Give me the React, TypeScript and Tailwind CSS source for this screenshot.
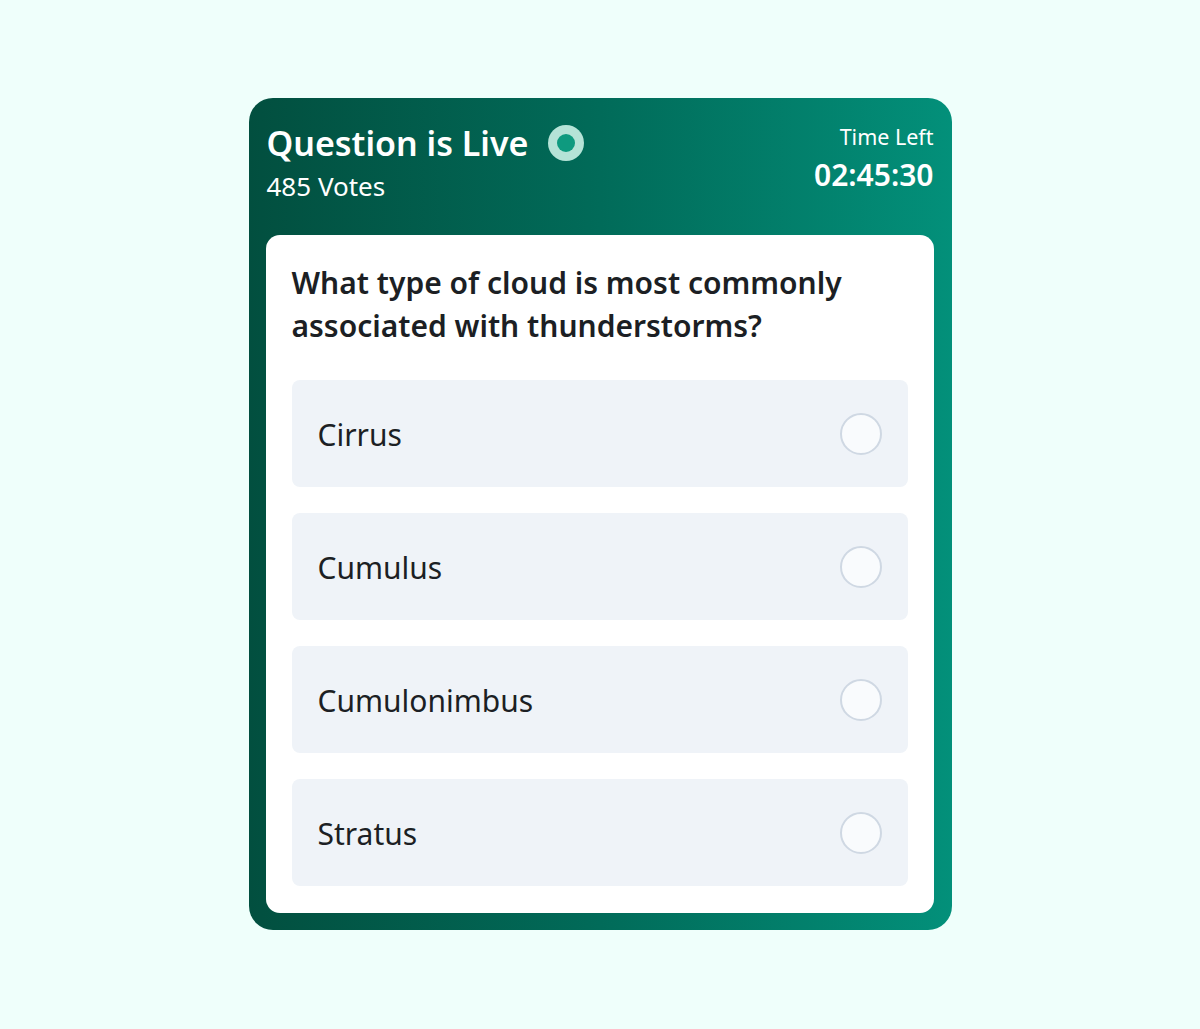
const OPTIONS = ['Cirrus', 'Cumulus', 'Cumulonimbus', 'Stratus']

export default function App() {
  return (
    <div
      className="min-h-[1029px] w-full bg-[#effffb] flex justify-center pt-[98px]"
      style={{ fontFamily: '"Noto Sans", "Open Sans", sans-serif' }}
    >
      <div className="w-[703px] h-[832px] rounded-[24px] bg-gradient-to-r from-[#024f3f] via-[#016b59] to-[#03907a] pl-[17px] pr-[18px] pb-[17px] pt-[24px] flex flex-col">
        {/* Header */}
        <div className="flex justify-between items-start h-[114px] pl-[1px]">
          <div className="flex flex-col">
            <div className="flex items-center gap-[20px]">
              <span className="text-[34px] leading-[42px] font-semibold text-white">Question is Live</span>
              <span className="w-[36px] h-[36px] rounded-full bg-[#b5e3d7] flex items-center justify-center">
                <span className="w-[18px] h-[18px] rounded-full bg-[#0e9a7f]" />
              </span>
            </div>
            <span className="text-[26px] leading-[32px] text-white mt-[6px]">485 Votes</span>
          </div>
          <div className="flex flex-col items-end pt-[2px]">
            <span className="text-[21.5px] leading-[26px] text-white">Time Left</span>
            <span className="text-[30px] leading-[40px] font-semibold text-white mt-[5px]">02:45:30</span>
          </div>
        </div>

        {/* Question card */}
        <div className="flex-1 bg-white rounded-[14px] px-[26px] pt-[26px] pb-[27px] flex flex-col">
          <h2 className="text-[30px] leading-[43px] font-semibold text-[#1c1f24] mb-[33px]">
            What type of cloud is most commonly
            <br />
            associated with thunderstorms?
          </h2>
          <div className="flex flex-col gap-[26px]">
            {OPTIONS.map((opt) => (
              <div
                key={opt}
                className="h-[107px] rounded-[8px] bg-[#eff3f8] flex items-center justify-between pl-[26px] pr-[26px]"
              >
                <span className="text-[30px] leading-[40px] text-[#1c1f24] pt-[2px]">{opt}</span>
                <span className="w-[42px] h-[42px] rounded-full border-2 border-[#cfd8e3] bg-[#f9fbfd]" />
              </div>
            ))}
          </div>
        </div>
      </div>
    </div>
  )
}
